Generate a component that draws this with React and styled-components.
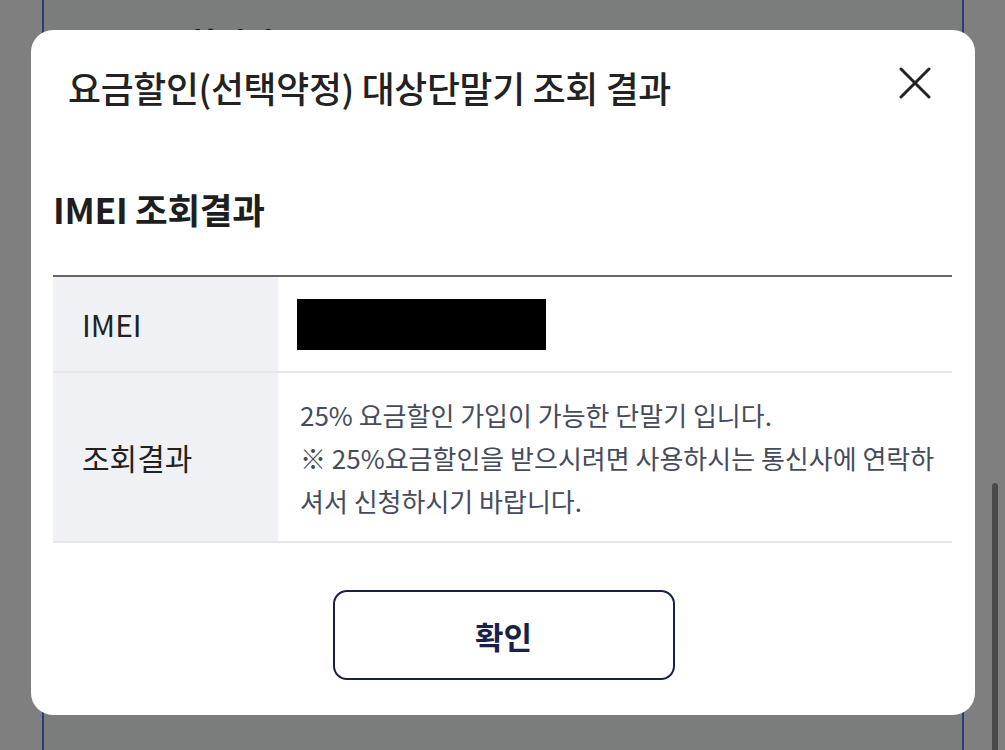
import React from "react";
import styled, { createGlobalStyle } from "styled-components";

const GlobalStyle = createGlobalStyle`
  html, body { margin: 0; padding: 0; }
  body {
    background: #7f7f7f;
    font-family: "Noto Sans CJK KR", "Noto Sans", sans-serif;
    overflow: hidden;
  }
  * { box-sizing: border-box; }
`;

const Page = styled.div`
  height: 750px;
  padding: 0 41px 0 42px;
  overflow: hidden;
`;

const BackCard = styled.div`
  height: 770px;
  background: #7b7d7d;
  border: 2px solid #2c3b7a;
  border-top: none;
  border-radius: 0 0 22px 22px;
  padding: 22px 0 0 38px;
`;

const BackHeading = styled.div`
  font-size: 32px;
  font-weight: 700;
  line-height: 40px;
  color: #1a1a1a;
`;

const Overlay = styled.div`
  position: fixed;
  inset: 0;
  display: flex;
  justify-content: center;
  align-items: flex-start;
  padding-top: 30px;
`;

const ScrollThumb = styled.div`
  position: fixed;
  right: 7px;
  top: 483px;
  width: 6px;
  height: 290px;
  border-radius: 3px;
  background: #4a4a4a;
`;

const Modal = styled.div`
  width: 944px;
  margin-left: 1px;
  background: #ffffff;
  border-radius: 22px;
  padding: 0 23px 35px 22px;
`;

const Header = styled.div`
  height: 120px;
  display: flex;
  align-items: center;
  justify-content: space-between;
  padding: 0 20px 6px 15px;
`;

const Title = styled.h2`
  margin: 0;
  font-size: 35.8px;
  font-weight: 500;
  color: #222222;
  letter-spacing: -0.3px;
  line-height: 44px;
`;

const CloseButton = styled.button`
  width: 34px;
  height: 34px;
  padding: 0;
  margin-bottom: 8px;
  border: none;
  background: none;
  display: flex;
  align-items: center;
  justify-content: center;
`;

const SectionHeading = styled.h3`
  margin: 37px 0 44px;
  font-size: 35.5px;
  line-height: 44px;
  font-weight: 700;
  color: #1e1e1e;
  letter-spacing: -0.3px;
`;

const Table = styled.div`
  border-top: 2px solid #666666;
`;

const Row = styled.div`
  display: grid;
  grid-template-columns: 225px 1fr;
  min-height: ${(p) => p.$h}px;
  border-bottom: 2px solid #e6e6e8;
`;

const Label = styled.div`
  background: #eff1f5;
  display: flex;
  align-items: center;
  padding-left: 29px;
  font-size: 30px;
  color: #222222;
`;

const Value = styled.div`
  display: flex;
  align-items: center;
  padding: 0 2px 0 ${(p) => p.$pl}px;
  font-size: 26px;
  line-height: 43px;
  color: #464b5c;
  letter-spacing: 0;
`;

const Redacted = styled.div`
  width: 249px;
  height: 51px;
  background: #000000;
`;

const Footer = styled.div`
  display: flex;
  justify-content: center;
  margin-top: 47px;
`;

const ConfirmButton = styled.button`
  width: 342px;
  height: 90px;
  background: #ffffff;
  border: 2px solid #17214a;
  border-radius: 14px;
  font-family: inherit;
  font-size: 31px;
  font-weight: 700;
  color: #17214a;
  margin-left: 2px;
`;

export default function App() {
  return (
    <>
      <GlobalStyle />
      <Page>
        <BackCard>
          <BackHeading>IMEI 조회결과</BackHeading>
        </BackCard>
      </Page>
      <ScrollThumb />
      <Overlay>
        <Modal>
          <Header>
            <Title>요금할인(선택약정) 대상단말기 조회 결과</Title>
            <CloseButton aria-label="닫기">
              <svg width="32" height="32" viewBox="0 0 32 32">
                <path
                  d="M2 2 L30 30 M30 2 L2 30"
                  stroke="#222"
                  strokeWidth="3"
                  strokeLinecap="round"
                />
              </svg>
            </CloseButton>
          </Header>
          <SectionHeading>IMEI 조회결과</SectionHeading>
          <Table>
            <Row $h={96}>
              <Label>IMEI</Label>
              <Value $pl={19}>
                <Redacted />
              </Value>
            </Row>
            <Row $h={170}>
              <Label>조회결과</Label>
              <Value $pl={22}>
                <div>
                  25% 요금할인 가입이 가능한 단말기 입니다.
                  <br />
                  {"※ 25%요금할인을 받으시려면 사용하시는 통신사에 연락하셔서 신청하시기 바랍니다."}
                </div>
              </Value>
            </Row>
          </Table>
          <Footer>
            <ConfirmButton>확인</ConfirmButton>
          </Footer>
        </Modal>
      </Overlay>
    </>
  );
}
